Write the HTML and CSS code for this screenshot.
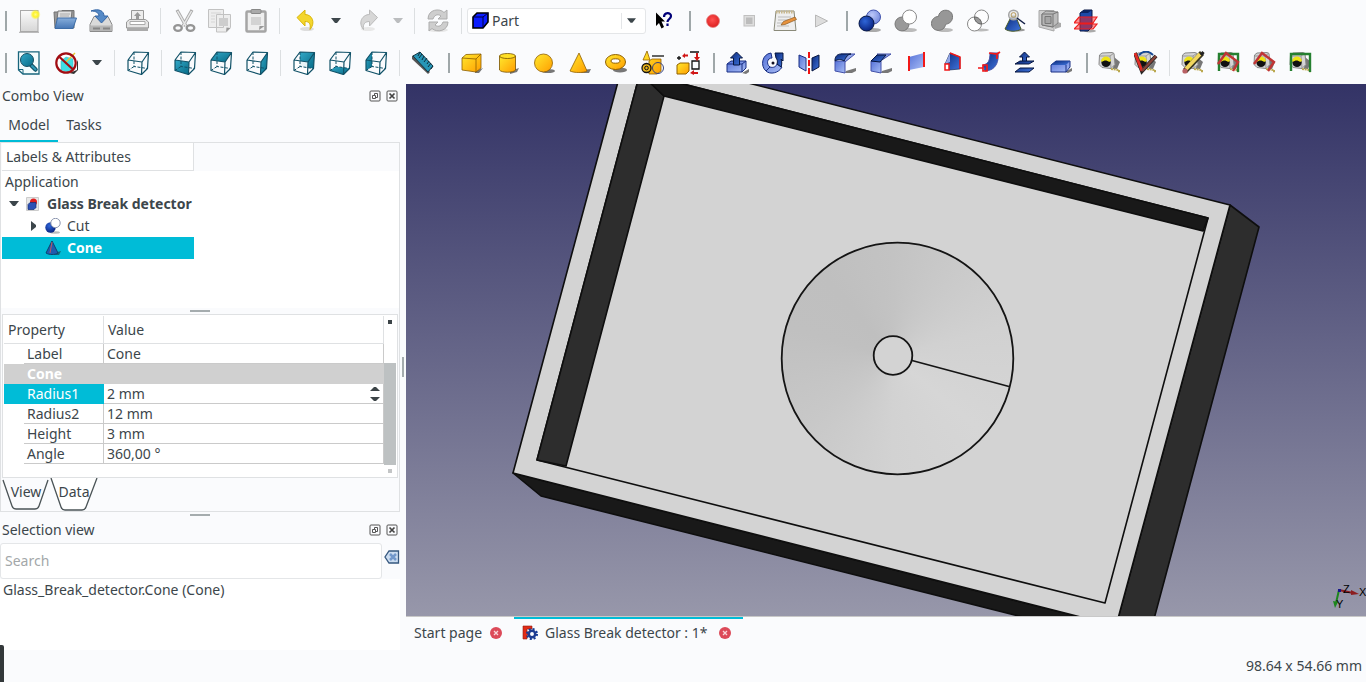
FILE: index.html
```html
<!DOCTYPE html>
<html lang="en">
<head>
<meta charset="utf-8">
<title>FreeCAD - Glass Break detector</title>
<link rel="stylesheet" href="styles.css">
</head>
<body>
<svg class="defs" aria-hidden="true">
  <defs>
    <linearGradient id="gold" x1="0" y1="0" x2="1" y2="1"><stop offset="0" stop-color="#ffe92e"/><stop offset="1" stop-color="#ff9d00"/></linearGradient>
    <linearGradient id="navy" x1="0" y1="0" x2="1" y2="1"><stop offset="0" stop-color="#0b2a7a"/><stop offset="1" stop-color="#3f74dd"/></linearGradient>
    <linearGradient id="sky" x1="0" y1="0" x2="1" y2="1"><stop offset="0" stop-color="#5572d8"/><stop offset="1" stop-color="#a9bdf5"/></linearGradient>
    <linearGradient id="teal" x1="0" y1="0" x2="1" y2="1"><stop offset="0" stop-color="#34a9c8"/><stop offset="1" stop-color="#066a86"/></linearGradient>
    <linearGradient id="paper" x1="0" y1="0" x2="0" y2="1"><stop offset="0" stop-color="#fbfbfb"/><stop offset="1" stop-color="#d6d6d6"/></linearGradient>
    <linearGradient id="folder" x1="0" y1="0" x2="0" y2="1"><stop offset="0" stop-color="#87aedb"/><stop offset="1" stop-color="#4777b5"/></linearGradient>
    <radialGradient id="ball" cx=".4" cy=".35" r=".7"><stop offset="0" stop-color="#2f66d8"/><stop offset="1" stop-color="#071f7c"/></radialGradient>
    <radialGradient id="paleball" cx=".4" cy=".35" r=".7"><stop offset="0" stop-color="#bcc8fa"/><stop offset="1" stop-color="#6f86da"/></radialGradient>
    <radialGradient id="red" cx=".45" cy=".4" r=".6"><stop offset="0" stop-color="#ff5151"/><stop offset="1" stop-color="#dc2020"/></radialGradient>
    <radialGradient id="glow"><stop offset="0" stop-color="#fff98a"/><stop offset=".5" stop-color="#fdf326"/><stop offset="1" stop-color="#fdf326" stop-opacity="0"/></radialGradient>
    <linearGradient id="space" x1="0" y1="0" x2="0" y2="1"><stop offset="0" stop-color="#333366"/><stop offset="1" stop-color="#9797aa"/></linearGradient>
  </defs>

  <symbol id="new" viewBox="0 0 24 24"><path d="M2 23.300h20" stroke="#aaa"/><rect x="3.500" y="1.500" width="17.500" height="21" fill="url(#paper)" stroke="#a9a9a9"/><circle cx="18.500" cy="5.500" r="5.200" fill="url(#glow)"/></symbol>
  <symbol id="open" viewBox="0 0 24 24"><path d="M2 19 1 3h7l1-1.500h12V19z" fill="#999" stroke="#727272"/><path d="M5 2h14l-1 9H4z" fill="#e1e1e1" stroke="#777"/><path d="M7 5h10M7 7h9" stroke="#aaa"/><path d="M4.500 9h19L20 19.500H2z" fill="url(#folder)" stroke="#3e6da6"/></symbol>
  <symbol id="save" viewBox="0 0 24 24"><path d="m1 15.500 4-8h14l4 8v7H1z" fill="#dadada" stroke="#8a8a8a"/><path d="M2 16.500h20v5.500H2z" fill="#b6b6b6"/><path d="M4 19.500h7m3 0h7" stroke="#858585" stroke-width="2"/><path d="M2 2c8-3 13 0 13 5h4l-6.500 7L6 7h4C10 4 7 2 2 2z" fill="#558ac7" stroke="#3465a4"/></symbol>
  <symbol id="print" viewBox="0 0 24 24"><path d="M6.500 1.500h12V12h-12z" fill="#ededed" stroke="#999"/><path d="M12.500 3 16 7h-2v4h-3V7H9z" fill="#999"/><path d="m1.500 13 3-2.500h16l3 2.500v6h-22z" fill="#e5e5e5" stroke="#989898"/><path d="M5 12.500h15v3H5z" fill="#fff" stroke="#aaa"/><path d="M2 18.500h21v3.500H2z" fill="#aaa"/></symbol>
  <symbol id="cut" viewBox="0 0 24 24"><path d="m5 1 9 16M20 1l-9 16" stroke="#aaa" stroke-width="3.200"/><path d="m5.500 2 8.500 15M19.500 2 11 17" stroke="#e8e8e8" stroke-width="1.500"/><ellipse cx="6" cy="19" rx="3.800" ry="2.800" fill="none" stroke="#959595" stroke-width="2.300"/><ellipse cx="18.500" cy="19" rx="3.800" ry="2.800" fill="none" stroke="#959595" stroke-width="2.300"/></symbol>
  <symbol id="copy" viewBox="0 0 24 24"><path d="M.5.500h15v18H.5zM8.500 5.500h14v13l-4 4.500h-10z" fill="#ededed" stroke="#c2c2c2"/><path d="M3 4h10M3 7h4M3 10h4M3 13h4" stroke="#d5d5d5"/><path d="M11 9h9v8h-9z" fill="#cdcdcd"/><path d="m18 23 .5-4.500 4 .500z" fill="#999"/></symbol>
  <symbol id="paste" viewBox="0 0 24 24"><rect x="2.500" y="2.500" width="19" height="20" rx="1" fill="#eee" stroke="#a5a5a5" stroke-width="2.500"/><rect x="7" y=".5" width="10" height="4" rx="1" fill="#aaa" stroke="#888"/><path d="M7 8h10v8H7z" fill="#d3d3d3"/><path d="m15 21 .5-4h5z" fill="#999"/></symbol>
  <symbol id="undo" viewBox="0 0 24 24"><ellipse cx="14" cy="20" rx="7" ry="2" fill="#ddd"/><path d="M4 8.500 12 1v4.500c7 0 11 8 5 15 1-6-1-8-5-8V17z" fill="#f4d62d" stroke="#d9b60b"/></symbol>
  <symbol id="redo" viewBox="0 0 24 24"><ellipse cx="11" cy="20" rx="7" ry="2" fill="#e8e8e8"/><path d="M20.500 8.500 12.500 1v4.500c-7 0-12 8-6 15-1-6 2-8 6-8V17z" fill="#d7d7d7" stroke="#bababa"/></symbol>
  <symbol id="refresh" viewBox="0 0 24 24"><ellipse cx="12" cy="21" rx="10" ry="2" fill="#e6e6e6"/><path d="M2 10C2 0 14-1 18 3.500L21 1v9h-9l3-3C11 4 8 7 7 10zM22 13c0 9-11 11-16 6.500L3 22v-9h9l-3 3c4 3 7 0 8-3z" fill="#cecece" stroke="#adadad"/></symbol>
  <symbol id="bluecube" viewBox="0 0 17 17"><path d="m1 5 4-4h11v9l-5 6H1z" fill="#0c1dff" stroke="#000" stroke-width="1.600"/><path d="M1 5h10v11M11 5l5-4" fill="none" stroke="#000040"/></symbol>
  <symbol id="help" viewBox="0 0 24 24"><path d="m4 3.500 9 9H9.500l2.500 5.500-2.500 1.500L7 14l-3 3z" fill="#000"/><path d="M12 8c0-5 7-5 7-1 0 3-3.500 3-3.500 6M15.500 14.500v2.500" fill="none" stroke="#000078" stroke-width="2.200"/></symbol>
  <symbol id="record" viewBox="0 0 24 24"><circle cx="12" cy="12" r="6.500" fill="url(#red)" stroke="#e58484" stroke-width=".8"/></symbol>
  <symbol id="stop" viewBox="0 0 24 24"><rect x="7" y="6.500" width="10.500" height="10.500" fill="#dedede" stroke="#c0c0c0"/><rect x="9" y="8.500" width="6.500" height="6.500" fill="#bcbcbc"/></symbol>
  <symbol id="macro" viewBox="0 0 24 24"><path d="M3 2h18l2 19.500H1z" fill="#eee" stroke="#8a8a7a"/><path d="M3 3h18" stroke="#c7b78d" stroke-width="3" stroke-dasharray="1.500 1"/><path d="M5 8h13M5 11h10M4 14h11M4 17h12" stroke="#bbb"/><path d="m8 16 2.500-3.500L22 8l1.500 2.500L12 15.500z" fill="#e8923c" stroke="#8c5a22" stroke-width=".7"/></symbol>
  <symbol id="play" viewBox="0 0 24 24"><path d="m6.500 6 12 6-12 6z" fill="#ddd" stroke="#b8b8b8"/></symbol>

  <symbol id="union" viewBox="0 0 24 24"><ellipse cx="15" cy="21" rx="8" ry="2" fill="#aaa"/><circle cx="15.500" cy="8" r="7" fill="url(#paleball)" stroke="#4254ad"/><circle cx="8.500" cy="14.500" r="7.500" fill="url(#ball)" stroke="#061743"/></symbol>
  <symbol id="cutbool" viewBox="0 0 24 24"><ellipse cx="15" cy="21" rx="8" ry="2" fill="#bbb"/><circle cx="8" cy="15" r="7" fill="#999" stroke="#777"/><circle cx="15.500" cy="8" r="7" fill="#fff" stroke="#888"/></symbol>
  <symbol id="fuse" viewBox="0 0 24 24"><ellipse cx="15" cy="21" rx="8" ry="2" fill="#bbb"/><path d="M8.500 7.500c1-9 15-8 14 1-.5 5-4 6-7 7-1 8-14 8-14-1 0-4 3-7 7-7z" fill="#979797" stroke="#777"/></symbol>
  <symbol id="common" viewBox="0 0 24 24"><ellipse cx="15" cy="21" rx="8" ry="1.500" fill="#bbb"/><circle cx="8.500" cy="15" r="7" fill="#fff" stroke="#888"/><circle cx="15.500" cy="8" r="7" fill="#fff" fill-opacity=".5" stroke="#888"/><path d="M8.500 8c4 0 7 3 7 7-4 0-7-3-7-7z" fill="#999" stroke="#666"/></symbol>
  <symbol id="check" viewBox="0 0 24 24"><ellipse cx="17" cy="21" rx="6" ry="1.500" fill="#999"/><path d="M9.500 7h4L19 20c-4 3-12 3-16 0z" fill="url(#navy)" stroke="#4a5a26"/><circle cx="11.500" cy="6" r="4.800" fill="#e6e6e6" fill-opacity=".75" stroke="#a5a5a5" stroke-width="1.500"/><circle cx="11.500" cy="6" r="2.400" fill="none" stroke="#b89a5a"/><path d="m15 9 8 6" stroke="#111d44" stroke-width="1.500"/></symbol>
  <symbol id="section" viewBox="0 0 24 24"><path d="m15 12 8 2v4l-6 2z" fill="#aaa"/><path d="M1 1.500h15V22L1 18z" fill="#cfcfcf" stroke="#a8a8a8"/><path d="m4 5 4-3 12 1v11l-5 4-11-2z" fill="#bcbcbc" stroke="#858585"/><path d="M4 5h11v13L4 16zM15 5l5-2" fill="#b5b5b5" stroke="#777"/><path d="M7 7.500h6v7H7z" fill="#a5a5a5" stroke="#777"/></symbol>
  <symbol id="slices" viewBox="0 0 24 24"><ellipse cx="16" cy="22" rx="6" ry="1.500" fill="#aaa"/><path d="m6 4 4-3h8v17l-4 4H6z" fill="#1c49a8" stroke="#071443"/><path d="m6 4 4-3h8l-4 3z" fill="#0b2463"/><path d="M5 8h18l-4 6H0zM5 15h18l-4 5H0z" fill="#ff2525" fill-opacity=".5" stroke="#ee1c1c" stroke-width="1.200"/></symbol>

  <symbol id="fit" viewBox="0 0 24 24"><path d="M1.500.800h20.500V23H6l-4.500-4z" fill="#f4fcfd" stroke="#18657c" stroke-width="1.300"/><path d="M2 18.500h4V23" fill="none" stroke="#18657c"/><path d="m14 14 4.500 4.500" stroke="#15566c" stroke-width="4.500" stroke-linecap="round"/><path d="m15 15 3.500 3.500" stroke="#2e9ab7" stroke-width="2" stroke-linecap="round"/><circle cx="10" cy="9" r="6.500" fill="url(#teal)" stroke="#174f63"/></symbol>
  <symbol id="nostyle" viewBox="0 0 24 24"><path d="m14 22 8-3V9l1 2v8l-4 4z" fill="#333"/><circle cx="11" cy="12" r="9.500" fill="#fdfefe"/><path d="m6 10 5-4 7 2v9l-5 4-7-2z" fill="#3fdde4" stroke="#4fb7c0" stroke-width=".6"/><path d="m11 11 9-9" stroke="#e5ca31" stroke-width="1.500"/><circle cx="11" cy="12" r="9.700" fill="none" stroke="#a10c12" stroke-width="2.200"/><path d="m4.500 6 13 12" stroke="#a10c12" stroke-width="2.200"/></symbol>
  <symbol id="wire" viewBox="0 0 24 24"><path d="M2 9l14 2-.5 12.500L2 19.500zM2 9l6-8 14.500.500L16 11M22.500 1.500l-1 16-6 6" fill="none" stroke="#115268" stroke-width="1.200" stroke-linejoin="round"/><path d="M8 1v14.500l13.500 2M8 15.500l-6 4" fill="none" stroke="#115268" stroke-dasharray="3 1.500"/></symbol>
  <symbol id="front" viewBox="0 0 24 24"><path d="M2 9l14 2-.5 12.500L2 19.500z" fill="url(#teal)"/><use href="#wire" width="24" height="24"/></symbol>
  <symbol id="top" viewBox="0 0 24 24"><path d="M2 9l6-8 14.500.500L16 11z" fill="url(#teal)"/><use href="#wire" width="24" height="24"/></symbol>
  <symbol id="right" viewBox="0 0 24 24"><path d="M16 11l6.500-9.500-1 16-6 6z" fill="url(#teal)"/><use href="#wire" width="24" height="24"/></symbol>
  <symbol id="rear" viewBox="0 0 24 24"><path d="M8 1l14.500.500-1 16L8 15.500z" fill="url(#teal)"/><path d="M2 9l14 2-.5 12.500L2 19.500z" fill="#fff" fill-opacity=".9"/><use href="#wire" width="24" height="24"/></symbol>
  <symbol id="bottom" viewBox="0 0 24 24"><path d="M2 19.500l6-4 13.500 2-6 6z" fill="url(#teal)"/><use href="#wire" width="24" height="24"/></symbol>
  <symbol id="left" viewBox="0 0 24 24"><path d="M2 9l6-8v14.500l-6 4z" fill="url(#teal)"/><use href="#wire" width="24" height="24"/></symbol>
  <symbol id="ruler" viewBox="0 0 24 24"><path d="m1 5 2-1 16 17-2 2L1 8z" fill="#555"/><path d="m2 5 7-4 13 14-5 6z" fill="#2796b7" stroke="#143744"/><path d="m9 1-2 4m4-2-3 4m5-2-2 4m5-2-3 4m5-1-2 3m4-1-3 4m5-1-2 3" stroke="#0d2f3d"/></symbol>

  <symbol id="box" viewBox="0 0 24 24"><path d="m15 20 8-3-4 5h-4z" fill="#777"/><path d="m2 7 4-3.500 15-.5v14l-5 4L2 19z" fill="url(#gold)" stroke="#8a5d00" stroke-width=".8"/><path d="m2 7 14 1v13M16 8l5-5" fill="none" stroke="#8a5d00" stroke-width=".8"/></symbol>
  <symbol id="cylinder" viewBox="0 0 24 24"><path d="m14 20 9-3-2 4-7 2z" fill="#777"/><path d="M3.500 5v14c2 3 14 3 16 0V5" fill="url(#gold)" stroke="#765000" stroke-width=".8"/><ellipse cx="11.500" cy="5" rx="8" ry="2.500" fill="#ffdf25" stroke="#765000" stroke-width=".8"/></symbol>
  <symbol id="sphere" viewBox="0 0 24 24"><ellipse cx="16" cy="20" rx="7" ry="2" fill="#777"/><circle cx="11.500" cy="12" r="9" fill="url(#gold)" stroke="#906000" stroke-width=".8"/></symbol>
  <symbol id="cone" viewBox="0 0 24 24"><path d="m13 19 10-1-2 4h-8z" fill="#777"/><path d="M11 2 2 20c4 2 14 2 17 0z" fill="url(#gold)" stroke="#906000" stroke-width=".8"/></symbol>
  <symbol id="torus" viewBox="0 0 24 24"><ellipse cx="16" cy="19" rx="7" ry="2.500" fill="#777"/><ellipse cx="11.500" cy="11" rx="10" ry="7.500" fill="url(#gold)" stroke="#906000"/><ellipse cx="11.500" cy="10" rx="4.500" ry="2.200" fill="#fff" stroke="#906000"/></symbol>
  <symbol id="prims" viewBox="0 0 24 24"><path d="M7 0 3 9h7zM9 10l3-2h9v12l-4 3H9z" fill="url(#gold)" stroke="#906000" stroke-width=".8"/><path d="M12 5h12" stroke="#111" stroke-width="1.300"/><circle cx="6.500" cy="17" r="4.500" fill="#e9b41b" stroke="#111" stroke-width="1.300"/><circle cx="6.500" cy="17" r="1.800" fill="none" stroke="#111"/><circle cx="18" cy="17" r="5.500" fill="none" stroke="#36437e"/></symbol>
  <symbol id="builder" viewBox="0 0 24 24"><path d="m1 14 3-2h9v8l-3 3H1z" fill="url(#gold)" stroke="#906000"/><path d="M14 1h9M3 5v4M1 7h4M16 10h7v8h-7z" fill="none" stroke="#111" stroke-width="1.300"/><path d="m6 5 3-3v1.500h3v2H9V7zM20 2v4h-2l3 4 3-4h-2V2zM22 21h-4v-2l-4 3 4 2v-1h4z" fill="#d11616"/></symbol>

  <symbol id="extrude" viewBox="0 0 24 24"><path d="m17 22 7-4v3l-3 2z" fill="#777"/><path d="m2 13 4-3h15v7l-4 4H2z" fill="url(#sky)" stroke="#182e83"/><path d="M2 13h15v8M17 13l4-3" fill="none" stroke="#182e83"/><path d="m11.500 1 6 6h-3v7h-6V7h-3z" fill="url(#navy)" stroke="#071640"/></symbol>
  <symbol id="revolve" viewBox="0 0 24 24"><path d="M10 2C1 3-1 15 5 20l4-4c-4-3-3-9 2-9zM5 20c4 4 13 2 16-4l-5-3c-1 3-4 4-7 3z" fill="url(#sky)" stroke="#182e83"/><path d="M14 2h8v8l-2-2c1 3 1 5 0 8l-4-3c1-3 0-5-1-6z" fill="url(#navy)" stroke="#071640"/><circle cx="12" cy="12" r="1.500" fill="#112"/></symbol>
  <symbol id="mirror" viewBox="0 0 24 24"><path d="m2 4 7 3v13l-7-4z" fill="url(#sky)" stroke="#182e83"/><path d="m15 7 7-3v12l-7 4z" fill="url(#navy)" stroke="#071640"/><path d="M12 1v22" stroke="#f01313" stroke-width="2" stroke-dasharray="6 2"/></symbol>
  <symbol id="fillet" viewBox="0 0 24 24"><path d="m13 20 10-3v3l-4 2h-7z" fill="#777"/><path d="M2 10h10v12l-10-2z" fill="url(#sky)" stroke="#4351a9"/><path d="m12 11 10-8H8z" fill="#92a7eb" stroke="#4351a9"/><path d="M2 9c0-3 2-6 6-6h10c-3 0-5 3-7 7-3-2-6-2-9 0z" fill="url(#navy)" stroke="#071640"/></symbol>
  <symbol id="chamfer" viewBox="0 0 24 24"><path d="m13 20 10-3v3l-4 2h-7z" fill="#777"/><path d="M2 10h10v12l-10-2z" fill="url(#sky)" stroke="#4351a9"/><path d="m13 9 9-6H8z" fill="#92a7eb" stroke="#4351a9"/><path d="m2 10 6-6h9l-6 7z" fill="url(#navy)" stroke="#071640"/></symbol>
  <symbol id="ruled" viewBox="0 0 24 24"><path d="m4 6 15-4v14L4 19z" fill="url(#sky)"/><path d="M4 5v15M19 1v15" stroke="#f21818" stroke-width="2"/></symbol>
  <symbol id="loft" viewBox="0 0 24 24"><path d="m4 13 5-11 10 4v12L8 19z" fill="url(#navy)" stroke="#071640" stroke-width=".6"/><path d="M9 2v9l-5 2z" fill="#91a6e6"/><path d="m9 2 10 4v12" fill="none" stroke="#f21818" stroke-width="1.500"/><path d="M4 13h4v6H4z" fill="#fff" stroke="#f21818" stroke-width="1.500"/></symbol>
  <symbol id="sweep" viewBox="0 0 24 24"><path d="M6 14c5-1 7-4 7-12h8c1 8-2 15-8 17l-5 1z" fill="url(#navy)" stroke="#4351a9"/><path d="m12 2 8 1 3-2m-3 2v5M1 17h5M6 14h4v6H6z" fill="none" stroke="#f21818" stroke-width="1.700"/></symbol>
  <symbol id="offset" viewBox="0 0 24 24"><path d="m11.500 1 5 5h-3v5h-4V6h-3z" fill="url(#navy)" stroke="#071640"/><path d="m2 13 5-3h14l-5 3zM2 21l5-4h14l-5 4z" fill="url(#navy)" stroke="#071640"/></symbol>
  <symbol id="thickness" viewBox="0 0 24 24"><path d="m16 21 7-4v3l-4 2z" fill="#777"/><path d="m2 14 5-4h14v6l-4 5H2z" fill="url(#sky)" stroke="#182e83"/><path d="m2 14 5-4h14l-4 4z" fill="url(#navy)"/><path d="M17 14v7" stroke="#182e83"/></symbol>

  <symbol id="tape" viewBox="0 0 24 24"><path d="m16 6 6 5-3 7h-4z" fill="#777"/><path d="M1.500 4 4 2l10-.5 2 1 1 11-4 4-9-1-3-3z" fill="#d5d5d5" stroke="#888"/><path d="M2 5h10l4-3M12 5l1 12" fill="none" stroke="#999"/><circle cx="8" cy="11.500" r="4.600" fill="#111"/><path d="M3 10c1-6 9-6 10 0l-2 1c-2-2-5-2-7 0z" fill="#eee315"/><path d="m13 18 8 1v3" fill="none" stroke="#bba951" stroke-width="2" stroke-dasharray="2 .7"/></symbol>
  <symbol id="angular" viewBox="0 0 24 24"><use href="#tape" width="24" height="24"/><path d="M5 4c5-5 10-4 14 0" fill="none" stroke="#174994" stroke-width="2"/><path d="m1 2 7 18L22 5" fill="none" stroke="#252525" stroke-width="4"/><path d="m1 2 7 18" stroke="#e12b25" stroke-width="2.800"/><path d="M8 20 22 5" stroke="#854238" stroke-width="2.500"/></symbol>
  <symbol id="measure-edit" viewBox="0 0 24 24"><use href="#tape" width="24" height="24"/><path d="m4 20 17-18" stroke="#39351f" stroke-width="5.500"/><path d="m5 18 14-15" stroke="#f1d65f" stroke-width="4"/><path d="m20 4 2.500-3" stroke="#222" stroke-width="3"/><circle cx="4" cy="20" r="2.600" fill="#b86165"/></symbol>
  <symbol id="measure-all" viewBox="0 0 24 24"><use href="#tape" width="24" height="24"/><path d="M2 20V3h19v18" fill="none" stroke="#258030" stroke-width="2.400"/><path d="M1 13 9 2l12 9-5 9" fill="none" stroke="#c13535" stroke-width="2.400"/></symbol>
  <symbol id="measure-3d" viewBox="0 0 24 24"><use href="#tape" width="24" height="24"/><path d="M1 13 9 2l12 9-6 9" fill="none" stroke="#c13535" stroke-width="2.400"/></symbol>
  <symbol id="measure-delta" viewBox="0 0 24 24"><use href="#tape" width="24" height="24"/><path d="M2 20V3h19v18" fill="none" stroke="#258030" stroke-width="2.400"/></symbol>

  <symbol id="docicon" viewBox="0 0 16 16"><path d="M1.500 1.500h12v13h-12z" fill="#e8e8e8" stroke="#ccc"/><circle cx="8.500" cy="6" r="3.500" fill="#df1f1f"/><path d="m3 8.500 2-2h6v5l-2 2H3z" fill="#2b50b5" stroke="#112c71" stroke-width=".7"/></symbol>
  <symbol id="cuticon" viewBox="0 0 16 16"><ellipse cx="10" cy="14.500" rx="5" ry="1.200" fill="#bbb"/><circle cx="5.500" cy="9.500" r="5.200" fill="url(#ball)"/><circle cx="10.500" cy="5" r="4.700" fill="#fff" stroke="#8a94ae"/></symbol>
  <symbol id="coneicon" viewBox="0 0 16 16"><path d="m9 13 7-2-2 4H9z" fill="#136779"/><path d="M7 1 1 13c3 2 9 2 12 0z" fill="#1f5caf" stroke="#0b436d"/><path d="M7 2 5 13" stroke="#bf5761"/></symbol>
  <symbol id="float" viewBox="0 0 12 12"><rect x="1" y="1" width="10" height="10" rx="1" fill="none" stroke="#555"/><path d="M5.500 5V3.500h3v4H7M3.500 5.500h3v3h-3z" fill="none" stroke="#555"/></symbol>
  <symbol id="close" viewBox="0 0 12 12"><rect x="1" y="1" width="10" height="10" rx="1" fill="none" stroke="#555"/><path d="m3.500 3.500 5 5m0-5-5 5" stroke="#444" stroke-width="1.700"/></symbol>
  <symbol id="tabclose" viewBox="0 0 12 12"><circle cx="6" cy="6" r="6" fill="#dc4a59"/><path d="m4 4 4 4m0-4L4 8" stroke="#f8d6da" stroke-width="1.300"/></symbol>
  <symbol id="clear" viewBox="0 0 16 14"><path d="M5 1h9.500v12H5L1 7z" fill="#cbdcf0" stroke="#36587f" stroke-width="1.300"/><path d="m6 4 6 6m0-6-6 6" stroke="#7298cb" stroke-width="2.500"/></symbol>
  <symbol id="freecad" viewBox="0 0 16 16"><path d="M1 1h9v3H5v3h4v3H5v4H1z" fill="#e22b16" stroke="#8d1c12" stroke-width=".6"/><circle cx="10" cy="9" r="5" fill="none" stroke="#133a96" stroke-width="2" stroke-dasharray="2 1.930"/><circle cx="10" cy="9" r="3.200" fill="#fff" stroke="#1d3c91" stroke-width="2.500"/></symbol>
  <symbol id="arrow" viewBox="0 0 10 6"><path d="M0 0h10L6 5H4z" fill="currentColor"/></symbol>
</svg>

<header class="toolbars">
  <div class="toolbar">
    <i class="grip"></i>
    <button class="tool" aria-label="New"><svg><use href="#new"/></svg></button>
    <button class="tool" aria-label="Open"><svg><use href="#open"/></svg></button>
    <button class="tool" aria-label="Save"><svg><use href="#save"/></svg></button>
    <button class="tool" aria-label="Print"><svg><use href="#print"/></svg></button>
    <i class="sep"></i>
    <button class="tool" aria-label="Cut"><svg><use href="#cut"/></svg></button>
    <button class="tool" aria-label="Copy"><svg><use href="#copy"/></svg></button>
    <button class="tool" aria-label="Paste"><svg><use href="#paste"/></svg></button>
    <i class="sep"></i>
    <button class="tool wide" aria-label="Undo"><svg><use href="#undo"/></svg></button>
    <button class="drop roomy" aria-label="Undo history"><svg><use href="#arrow"/></svg></button>
    <button class="tool wide" aria-label="Redo"><svg><use href="#redo"/></svg></button>
    <button class="drop faded" aria-label="Redo history"><svg><use href="#arrow"/></svg></button>
    <i class="sep"></i>
    <button class="tool" aria-label="Refresh"><svg><use href="#refresh"/></svg></button>
    <i class="sep"></i>
    <div class="workbench">
      <svg class="wb-icon"><use href="#bluecube"/></svg>
      <select aria-label="Workbench"><option>Part</option></select>
      <svg class="wb-arrow"><use href="#arrow"/></svg>
    </div>
    <button class="tool" aria-label="What's this?"><svg><use href="#help"/></svg></button>
    <i class="grip"></i>
    <button class="tool" aria-label="Record macro"><svg><use href="#record"/></svg></button>
    <button class="tool" aria-label="Stop macro"><svg><use href="#stop"/></svg></button>
    <button class="tool" aria-label="Macros"><svg><use href="#macro"/></svg></button>
    <button class="tool" aria-label="Execute macro"><svg><use href="#play"/></svg></button>
    <i class="grip"></i>
    <button class="tool" aria-label="Boolean"><svg><use href="#union"/></svg></button>
    <button class="tool" aria-label="Cut shapes"><svg><use href="#cutbool"/></svg></button>
    <button class="tool" aria-label="Union"><svg><use href="#fuse"/></svg></button>
    <button class="tool" aria-label="Intersection"><svg><use href="#common"/></svg></button>
    <button class="tool" aria-label="Check geometry"><svg><use href="#check"/></svg></button>
    <button class="tool" aria-label="Section"><svg><use href="#section"/></svg></button>
    <button class="tool" aria-label="Cross-sections"><svg><use href="#slices"/></svg></button>
  </div>
  <div class="toolbar">
    <i class="grip"></i>
    <button class="tool" aria-label="Fit all"><svg><use href="#fit"/></svg></button>
    <button class="tool wide" aria-label="Draw style"><svg><use href="#nostyle"/></svg></button>
    <button class="drop" aria-label="Draw style list"><svg><use href="#arrow"/></svg></button>
    <i class="sep"></i>
    <button class="tool" aria-label="Axonometric"><svg><use href="#wire"/></svg></button>
    <i class="sep"></i>
    <button class="tool" aria-label="Front"><svg><use href="#front"/></svg></button>
    <button class="tool" aria-label="Top"><svg><use href="#top"/></svg></button>
    <button class="tool" aria-label="Right"><svg><use href="#right"/></svg></button>
    <i class="sep"></i>
    <button class="tool" aria-label="Rear"><svg><use href="#rear"/></svg></button>
    <button class="tool" aria-label="Bottom"><svg><use href="#bottom"/></svg></button>
    <button class="tool" aria-label="Left"><svg><use href="#left"/></svg></button>
    <i class="sep"></i>
    <button class="tool" aria-label="Measure distance"><svg><use href="#ruler"/></svg></button>
    <i class="grip"></i>
    <button class="tool" aria-label="Box"><svg><use href="#box"/></svg></button>
    <button class="tool" aria-label="Cylinder"><svg><use href="#cylinder"/></svg></button>
    <button class="tool" aria-label="Sphere"><svg><use href="#sphere"/></svg></button>
    <button class="tool" aria-label="Cone"><svg><use href="#cone"/></svg></button>
    <button class="tool" aria-label="Torus"><svg><use href="#torus"/></svg></button>
    <button class="tool" aria-label="Create primitives"><svg><use href="#prims"/></svg></button>
    <button class="tool" aria-label="Shape builder"><svg><use href="#builder"/></svg></button>
    <i class="grip"></i>
    <button class="tool" aria-label="Extrude"><svg><use href="#extrude"/></svg></button>
    <button class="tool" aria-label="Revolve"><svg><use href="#revolve"/></svg></button>
    <button class="tool" aria-label="Mirror"><svg><use href="#mirror"/></svg></button>
    <button class="tool" aria-label="Fillet"><svg><use href="#fillet"/></svg></button>
    <button class="tool" aria-label="Chamfer"><svg><use href="#chamfer"/></svg></button>
    <button class="tool" aria-label="Ruled surface"><svg><use href="#ruled"/></svg></button>
    <button class="tool" aria-label="Loft"><svg><use href="#loft"/></svg></button>
    <button class="tool" aria-label="Sweep"><svg><use href="#sweep"/></svg></button>
    <button class="tool" aria-label="Offset"><svg><use href="#offset"/></svg></button>
    <button class="tool" aria-label="Thickness"><svg><use href="#thickness"/></svg></button>
    <i class="grip"></i>
    <button class="tool" aria-label="Measure linear"><svg><use href="#tape"/></svg></button>
    <button class="tool" aria-label="Measure angular"><svg><use href="#angular"/></svg></button>
    <i class="sep"></i>
    <button class="tool" aria-label="Clear measurements"><svg><use href="#measure-edit"/></svg></button>
    <button class="tool" aria-label="Toggle all"><svg><use href="#measure-all"/></svg></button>
    <button class="tool" aria-label="Toggle 3D"><svg><use href="#measure-3d"/></svg></button>
    <button class="tool" aria-label="Toggle delta"><svg><use href="#measure-delta"/></svg></button>
  </div>
</header>

<div class="workspace">
  <aside class="side">
    <div class="dock-title"><span>Combo View</span>
      <button class="dock-btn" aria-label="Float Combo View"><svg><use href="#float"/></svg></button><button class="dock-btn" aria-label="Close Combo View"><svg><use href="#close"/></svg></button>
    </div>
    <nav class="tabs">
      <button class="tab active">Model</button>
      <button class="tab">Tasks</button>
    </nav>
    <section class="combo">
      <div class="tree-head"><span>Labels &amp; Attributes</span></div>
      <ul class="tree">
        <li class="root">Application</li>
        <li class="doc"><svg class="caret"><use href="#arrow"/></svg><svg class="node"><use href="#docicon"/></svg><b>Glass Break detector</b></li>
        <li class="child"><svg class="caret closed"><use href="#arrow"/></svg><svg class="node"><use href="#cuticon"/></svg><span>Cut</span></li>
        <li class="child selected"><i class="caret"></i><svg class="node"><use href="#coneicon"/></svg><b>Cone</b></li>
      </ul>
      <i class="hsplit"></i>
      <div class="props">
        <table>
          <colgroup><col class="c-ind"><col class="c-name"><col></colgroup>
          <thead><tr><th colspan="2">Property</th><th>Value</th></tr></thead>
          <tbody>
            <tr><td></td><td>Label</td><td>Cone</td></tr>
            <tr class="group"><td></td><td colspan="2">Cone</td></tr>
            <tr class="current"><td></td><td><label for="radius1">Radius1</label></td><td><div class="spin"><input id="radius1" type="text" value="2 mm"><svg class="spin-arrows" viewBox="0 0 10 16"><path d="M0 5h10L6 1H4zM0 11h10l-4 4H4z" fill="#3c4447"/></svg></div></td></tr>
            <tr><td></td><td>Radius2</td><td>12 mm</td></tr>
            <tr><td></td><td>Height</td><td>3 mm</td></tr>
            <tr><td></td><td>Angle</td><td>360,00 °</td></tr>
          </tbody>
        </table>
        <div class="scroll"><i class="dot"></i><i class="thumb"></i><i class="dot pale"></i></div>
      </div>
      <div class="sheet-tabs">
        <button class="sheet"><svg viewBox="0 0 48 33"><path d="M1 2 10 28q1 3 4 3h19q3 0 4-3L46 2"/></svg><span>View</span></button>
        <button class="sheet front"><svg viewBox="0 0 48 33"><path d="M1 0 11 29q1 3 4 3h17q3 0 4-3L47 0"/></svg><span>Data</span></button>
      </div>
    </section>
    <i class="hsplit"></i>
    <div class="dock-title"><span>Selection view</span>
      <button class="dock-btn" aria-label="Float Selection view"><svg><use href="#float"/></svg></button><button class="dock-btn" aria-label="Close Selection view"><svg><use href="#close"/></svg></button>
    </div>
    <div class="search"><input type="text" placeholder="Search" aria-label="Search"><button aria-label="Clear search"><svg><use href="#clear"/></svg></button></div>
    <div class="sel-list">Glass_Break_detector.Cone (Cone)</div>
  </aside>
  <i class="vsplit"></i>
  <main class="main">
    <svg class="viewport" viewBox="406 84 960 532" preserveAspectRatio="xMidYMid slice" role="img" aria-label="3D view of a box with a cone">
      <rect x="0" y="84" width="1800" height="532" fill="url(#space)"/>
      <g stroke="#0e0e0e" stroke-width="1.600" stroke-linejoin="round">
        <path d="m1230 205 29 22-109 407-34-8z" fill="#2d2d2d"/>
        <path d="m513 473 28 23 609 153-34-23z" fill="#191919"/>
        <path d="M626 52 1230 205 1116 626 513 473z" fill="#d3d3d3"/>
        <path d="m640 73 568 145-103 385-568-143z" fill="#d3d3d3"/>
        <path d="m640 73 24 23-98 370-29-6z" fill="#2d2d2d"/>
        <path d="m640 73 568 145-5 13L664 96z" fill="#191919"/>
      </g>
      <foreignObject x="781" y="242" width="233" height="233"><div class="cone-shade"></div></foreignObject>
      <g fill="none" stroke="#141414" stroke-width="1.800">
        <circle cx="897.500" cy="358.500" r="115.800"/>
        <circle cx="893" cy="355.500" r="19.300" fill="#d3d3d3"/>
        <path d="m912 360.500 97 26"/>
      </g>
      <path d="m1339 590 14 3" stroke="#8c1d20" stroke-width="2"/><path d="m1351 590 8 4-8 1z" fill="#8c1d20"/>
      <path d="m1339 590-3 13" stroke="#1d861d" stroke-width="2"/><path d="m1333 601 5 1-3 6z" fill="#1d861d"/>
      <path d="M1338 589h3v3h-3z" fill="#16168a"/>
      <g class="axis"><text x="1343" y="593">Z</text><text x="1359" y="596">X</text><text x="1336" y="608">Y</text></g>
    </svg>
    <nav class="doc-tabs">
      <div class="doc-tab"><a href="#start">Start page</a><button aria-label="Close Start page"><svg><use href="#tabclose"/></svg></button></div>
      <div class="doc-tab active"><svg class="node"><use href="#freecad"/></svg><a href="#doc">Glass Break detector : 1*</a><button aria-label="Close document"><svg><use href="#tabclose"/></svg></button></div>
    </nav>
  </main>
</div>
<footer class="status"><i class="edge"></i><span>98.64 x 54.66 mm</span></footer>
</body>
</html>
```
FILE: styles.css
```css
* { box-sizing: border-box; }
body {
  margin: 0;
  height: 100vh;
  display: flex;
  flex-direction: column;
  overflow: hidden;
  background: #fafbfd;
  color: #3c464b;
  font: 14px/20px "Noto Sans", "Open Sans", sans-serif;
}
button { border: 0; padding: 0; background: none; color: inherit; font: inherit; }
input, select { font: inherit; color: inherit; }
a { color: inherit; text-decoration: none; }
svg { display: block; flex: none; }
i { display: block; flex: none; }
.defs { position: absolute; width: 0; height: 0; }

.toolbar { display: flex; align-items: center; height: 42px; }
.tool { flex: none; width: 36px; height: 36px; display: flex; align-items: center; justify-content: center; }
.tool svg { width: 24px; height: 24px; }
.tool.wide { width: 38px; padding-left: 2px; }
.drop { flex: none; width: 24px; height: 36px; display: flex; align-items: center; justify-content: center; color: #3c464b; }
.drop svg { width: 10px; height: 6px; }
.drop.roomy { width: 26px; }
.drop.faded { width: 22px; color: #bbbdbf; }
.grip { width: 13px; height: 20px; padding: 0 4px 0 7px; background: #9fa7a9 content-box; }
.grip:first-child { width: 11px; padding: 0 4px 0 5px; }
.sep { width: 11px; height: 26px; padding: 0 5px; background: #dcdfe1 content-box; }
.workbench { position: relative; width: 179px; height: 26px; }
.workbench select {
  width: 100%; height: 100%; padding: 0 24px; border: 1px solid #e4e6e8; border-radius: 3px;
  background: #fff; appearance: none;
}
.wb-icon { position: absolute; left: 5px; top: 4px; width: 17px; height: 17px; }
.wb-arrow { position: absolute; right: 5px; top: 5px; width: 20px; height: 16px; padding: 5px; border-left: 1px solid #e4e6e8; }

.workspace { flex: 1; min-height: 0; display: flex; }
.side { width: 400px; flex: none; display: flex; flex-direction: column; }
.dock-title { display: flex; align-items: center; gap: 5px; height: 25px; padding: 0 2px 1px; }
.dock-title span { flex: 1; }
.dock-btn svg { width: 12px; height: 12px; }
.tabs { display: flex; height: 33px; }
.tab { width: 58px; border-bottom: 2px solid transparent; }
.tab.active { border-color: #00bcd7; }
.tab + .tab { width: 52px; }
.combo { flex: 1; min-height: 0; display: flex; flex-direction: column; border: 1px solid #dfe1e3; }
.tree-head { height: 28px; padding-left: 1px; }
.tree-head span { display: block; width: 192px; height: 28px; padding: 4px; background: #fff; border: solid #dfe1e3; border-width: 0 1px 1px 0; }
.tree { flex: 1; margin: 0; padding: 0 1px; list-style: none; background: #fff; }
.tree li { display: flex; align-items: center; width: 192px; height: 22px; white-space: nowrap; }
.tree .root { padding-left: 3px; }
.tree .doc { padding-left: 7px; }
.tree .child { padding-left: 27px; }
.caret { width: 10px; height: 6px; margin-right: 6px; }
.caret.closed { transform: rotate(-90deg); }
.node { width: 16px; height: 16px; margin-right: 6px; }
.tree .selected { background: #00bcd7; color: #fff; }
.hsplit { height: 6px; display: flex; align-items: center; justify-content: center; }
.hsplit::after { content: ""; width: 20px; height: 2px; background: #a5acae; }
.props { display: flex; height: 164px; margin: 0 1px; border: 1px solid #dfe1e3; background: #fff; padding: 1px; }
.props table { flex: 1; align-self: flex-start; border-collapse: separate; border-spacing: 0; table-layout: fixed; }
.c-ind { width: 20px; }
.c-name { width: 80px; }
th { height: 28px; padding: 0 4px; font-weight: 400; text-align: left; border: solid #dfe1e3; border-width: 0 1px 1px 0; }
td { height: 20px; padding: 0 3px; line-height: 19px; border-bottom: 1px solid #cacaca; border-right: 1px solid #cacaca; }
td:first-child { border: 0; }
.group td { background: #d0d0d0; color: #fff; font-weight: 700; border-color: #d0d0d0; }
.current td:nth-child(-n+2) { background: #00bcd7; color: #fff; border-color: #00bcd7; }
.spin { display: flex; align-items: center; height: 19px; }
.spin input { flex: 1; min-width: 0; height: 19px; padding: 0; border: 0; background: none; outline: 0; }
.spin-arrows { width: 10px; height: 16px; }
.scroll { width: 12px; display: flex; flex-direction: column; align-items: center; padding: 4px 0 3px; }
.dot { width: 4px; height: 4px; background: #3c4447; }
.dot.pale { background: #c3c5c6; margin-top: 4px; }
.thumb { width: 12px; height: 102px; margin-top: auto; background: #bdc1c2; }
.sheet-tabs { display: flex; height: 33px; padding-left: 1px; }
.sheet { position: relative; width: 48px; height: 33px; padding-bottom: 6px; }
.sheet svg { position: absolute; inset: 0; width: 48px; height: 33px; fill: none; stroke: #4b5457; stroke-width: 1.3; }
.sheet.front svg { fill: #fff; }
.sheet span { position: relative; }
.search { display: flex; height: 36px; }
.search input { flex: 1; min-width: 0; padding: 0 4px; border: 1px solid #e4e6e8; border-radius: 3px; background: #fff; outline: 0; }
.search input::placeholder { color: #a3a7a9; opacity: 1; }
.search button { width: 18px; height: 28px; padding-left: 2px; }
.search button svg { width: 16px; height: 14px; }
.sel-list { height: 71px; padding: 1px 3px; background: #fff; }

.vsplit { width: 6px; display: flex; align-items: center; padding-left: 2px; }
.vsplit::after { content: ""; width: 2px; height: 20px; background: #a5acae; }
.main { flex: 1; min-width: 0; display: flex; flex-direction: column; }
.viewport { flex: 1; min-height: 0; width: 100%; }
.cone-shade {
  width: 233px; height: 233px; border-radius: 50%;
  background: conic-gradient(at 48% 49%, #c3c3c3, #d1d1d1 75deg, #d6d6d6 130deg, #d2d2d2 180deg, #c8c8c8 230deg, #c0c0c0 285deg, #bfbfbf 320deg, #c3c3c3);
}
.axis { font: 11px "Liberation Sans", sans-serif; fill: #000; }
.doc-tabs { display: flex; height: 34px; border-top: 1px solid #c8c8c8; }
.doc-tab { display: flex; align-items: center; padding: 0 12px 4px 8px; border-top: 2px solid transparent; }
.doc-tab button { margin-left: 8px; }
.doc-tab button svg { width: 12px; height: 12px; }
.doc-tab.active { border-color: #00bcd7; }
.doc-tab .node { margin-right: 7px; }
.doc-tab.active button { margin-left: 12px; }
.status { position: relative; display: flex; justify-content: flex-end; align-items: center; height: 32px; padding-right: 4px; }
.edge { position: absolute; left: 0; bottom: 0; width: 4px; height: 37px; background: #33383a; border-top-right-radius: 2px; }
```
